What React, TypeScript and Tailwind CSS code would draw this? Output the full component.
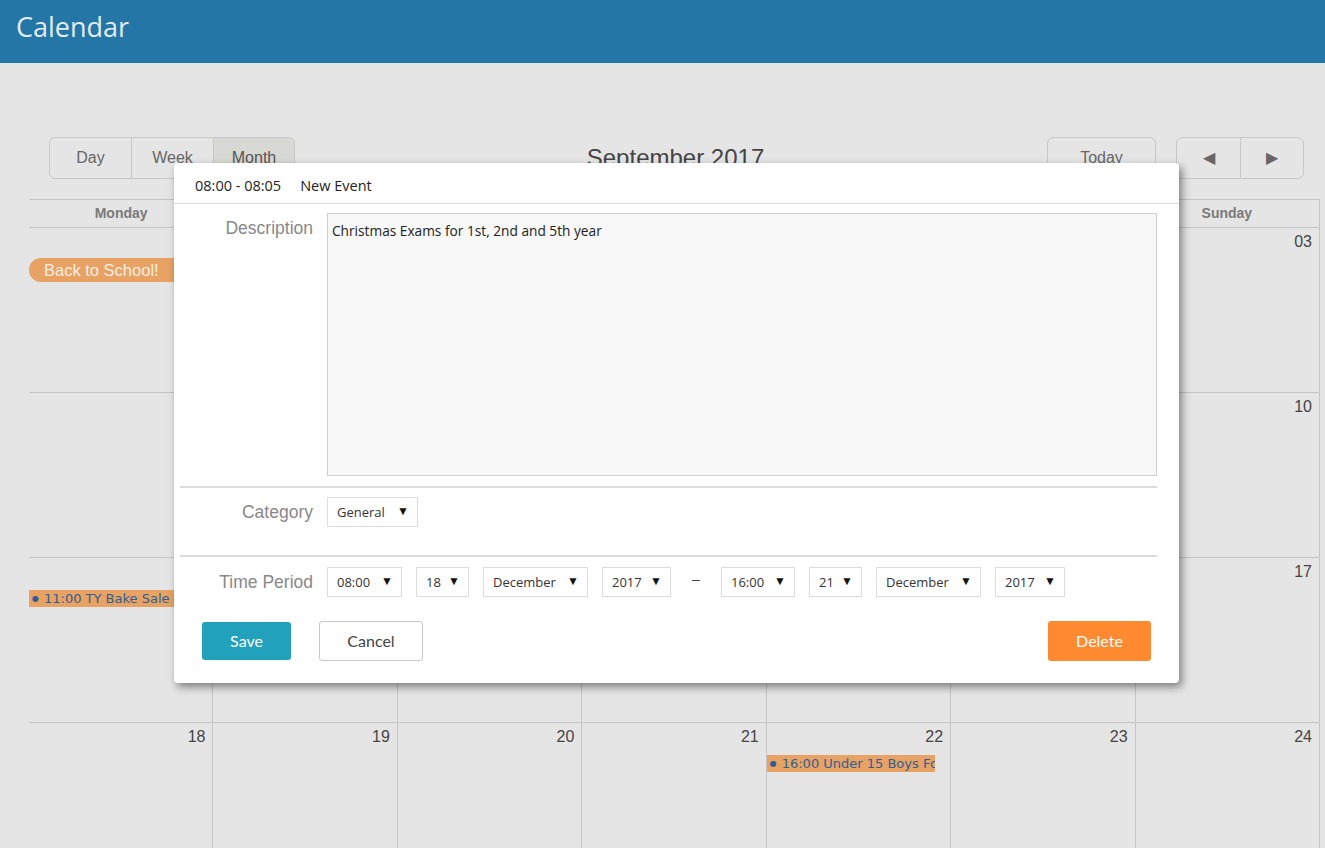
import React from "react";

const weeks: { day: string; events?: { kind: "pill" | "bar"; label: string; width?: string }[] }[][] = [
  [
    { day: "28", events: [{ kind: "pill", label: "Back to School!" }] },
    { day: "29" },
    { day: "30" },
    { day: "31" },
    { day: "01" },
    { day: "02" },
    { day: "03" },
  ],
  [{ day: "04" }, { day: "05" }, { day: "06" }, { day: "07" }, { day: "08" }, { day: "09" }, { day: "10" }],
  [
    { day: "11", events: [{ kind: "bar", label: "11:00 TY Bake Sale" }] },
    { day: "12" },
    { day: "13" },
    { day: "14" },
    { day: "15" },
    { day: "16" },
    { day: "17" },
  ],
  [
    { day: "18" },
    { day: "19" },
    { day: "20" },
    { day: "21" },
    { day: "22", events: [{ kind: "bar", label: "16:00 Under 15 Boys Football", width: "w-[168px]" }] },
    { day: "23" },
    { day: "24" },
  ],
];

const dayNames = ["Monday", "Tuesday", "Wednesday", "Thursday", "Friday", "Saturday", "Sunday"];

function FakeSelect({ value, width }: { value: string; width: string }) {
  return (
    <div
      className={`${width} h-[30px] border border-[#dcdcdc] bg-white flex items-center justify-between pl-[9px] pr-[8px] text-[13px] text-[#333] font-['Open_Sans',sans-serif]`}
    >
      <span className="pt-[1px]">{value}</span>
      <span className="text-[12px] text-[#111] -mt-[3px]">▼</span>
    </div>
  );
}

export default function App() {
  return (
    <div className="relative w-[1325px] h-[848px] overflow-hidden bg-[#e5e5e5] font-['Liberation_Sans',Arial,sans-serif]">
      <header className="h-[63px] bg-[#2376a6] flex items-center pl-[16px] pb-[10px]">
        <h1 className="text-[27px] text-[#e3ecf2] font-['Open_Sans',sans-serif] leading-none">Calendar</h1>
      </header>

      <div className="pl-[29px] pr-[5px] pt-[74px]">
        {/* toolbar */}
        <div className="grid grid-cols-[1fr_auto_1fr] items-center pl-[20px] pr-[18px] h-[42px]">
          <div className="flex">
            <div className="flex h-[42px] border border-[#c8c8c8] rounded-[6px] overflow-hidden text-[16px] text-[#666]">
              <div className="w-[82px] flex items-center justify-center border-r border-[#c8c8c8]">Day</div>
              <div className="w-[82px] flex items-center justify-center border-r border-[#c8c8c8]">Week</div>
              <div className="w-[80px] flex items-center justify-center bg-[#d8d8d4] text-[#555]">Month</div>
            </div>
          </div>
          <div className="text-[24px] text-[#444] text-center px-4">September 2017</div>
          <div className="flex justify-end gap-[20px] pr-[-2px] translate-x-[2px]">
            <div className="w-[109px] h-[42px] border border-[#c8c8c8] rounded-[6px] flex items-center justify-center text-[16px] text-[#666]">
              Today
            </div>
            <div className="flex h-[42px] border border-[#c8c8c8] rounded-[6px] overflow-hidden text-[16px] text-[#666]">
              <div className="w-[64px] flex items-center justify-center border-r border-[#c8c8c8]">◀</div>
              <div className="w-[62px] flex items-center justify-center">▶</div>
            </div>
          </div>
        </div>

        {/* grid */}
        <div className="mt-[20px] border-t border-[#c6c6c6]">
          <div className="grid grid-cols-7 h-[28px] border-b border-[#c6c6c6] border-r">
            {dayNames.map((d) => (
              <div key={d} className="flex items-center justify-center text-[14px] font-bold text-[#7a7a7a]">
                {d}
              </div>
            ))}
          </div>
          {weeks.map((week, wi) => (
            <div key={wi} className="grid grid-cols-7 h-[165px] border-b border-[#c6c6c6]">
              {week.map((cell, ci) => (
                <div key={ci} className="border-r border-[#c6c6c6] pt-[5px]">
                  <div className="text-right pr-[7px] text-[16px] text-[#444] leading-[18px]">{cell.day}</div>
                  {cell.events?.map((ev, ei) =>
                    ev.kind === "pill" ? (
                      <div
                        key={ei}
                        className="mt-[7px] h-[24px] rounded-full bg-[#e8a264] text-[#fbeee2] text-[16.5px] flex items-center pl-[15px] w-[280px]"
                      >
                        {ev.label}
                      </div>
                    ) : (
                      <div
                        key={ei}
                        className={`mt-[9px] h-[17px] bg-[#e8a264] text-[#2e5f94] text-[13px] flex items-center pl-[3px] whitespace-nowrap overflow-hidden font-['DejaVu_Sans',sans-serif] ${ev.width ?? "w-full"}`}
                      >
                        <span className="text-[8px] mr-[5px]">●</span>
                        {ev.label}
                      </div>
                    )
                  )}
                </div>
              ))}
            </div>
          ))}
        </div>
      </div>

      {/* modal */}
      <div className="absolute left-[174px] top-[163px] w-[1005px] h-[520px] bg-white rounded-[4px] shadow-[3px_4px_8px_rgba(0,0,0,0.45)]">
        <div className="h-[41px] border-b border-[#dcdcdc] flex items-center pl-[21px] pt-[5px] text-[14.5px] text-[#222] font-['Open_Sans',sans-serif]">
          <span>08:00 - 08:05</span>
          <span className="ml-[19px]">New Event</span>
        </div>

        <div className="pl-[6px] pr-[22px]">
          <div className="flex gap-[14px] mt-[9px]">
            <div className="w-[133px] text-right text-[17.5px] text-[#888] pt-[2px]">Description</div>
            <div className="flex-1 h-[263px] bg-[#f8f8f8] border border-[#cfcfcf] px-[4px] pt-[7px] text-[13.7px] text-[#222] font-['Open_Sans',sans-serif]">
              Christmas Exams for 1st, 2nd and 5th year
            </div>
          </div>

          <div className="mt-[10px] h-[2px] bg-[#dcdcdc]" />

          <div className="flex gap-[14px] items-center mt-[9px]">
            <div className="w-[133px] text-right text-[17.5px] text-[#888]">Category</div>
            <FakeSelect value="General" width="w-[91px]" />
          </div>

          <div className="mt-[28px] h-[2px] bg-[#dcdcdc]" />

          <div className="flex items-center mt-[10px]">
            <div className="w-[133px] text-right text-[17.5px] text-[#888] mr-[14px]">Time Period</div>
            <div className="flex items-center gap-[14px]">
              <FakeSelect value="08:00" width="w-[75px]" />
              <FakeSelect value="18" width="w-[53px]" />
              <FakeSelect value="December" width="w-[105px]" />
              <FakeSelect value="2017" width="w-[69px]" />
            </div>
            <div className="w-[50px] text-center text-[#444] text-[14px] -mt-[6px]">–</div>
            <div className="flex items-center gap-[14px]">
              <FakeSelect value="16:00" width="w-[74px]" />
              <FakeSelect value="21" width="w-[53px]" />
              <FakeSelect value="December" width="w-[105px]" />
              <FakeSelect value="2017" width="w-[70px]" />
            </div>
          </div>

          <div className="flex items-center justify-between mt-[24px] pl-[22px] pr-[6px] font-['Lato',sans-serif] text-[16px]">
            <div className="flex items-center gap-[28px]">
              <div className="w-[89px] h-[38px] bg-[#22a1bc] rounded-[3px] text-white flex items-center justify-center">
                Save
              </div>
              <div className="w-[104px] h-[40px] border border-[#c8c8c8] rounded-[3px] text-[#444] flex items-center justify-center">
                Cancel
              </div>
            </div>
            <div className="w-[103px] h-[40px] bg-[#ff8a2f] rounded-[3px] text-white flex items-center justify-center">
              Delete
            </div>
          </div>
        </div>
      </div>
    </div>
  );
}
